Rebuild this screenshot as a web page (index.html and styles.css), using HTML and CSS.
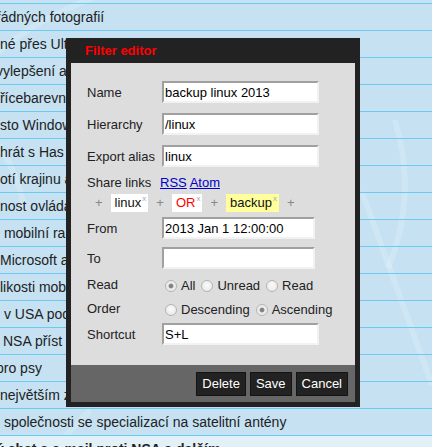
FILE: index.html
```html
<!DOCTYPE html>
<html lang="cs">
<head>
<meta charset="utf-8">
<title>Filter editor</title>
<link rel="stylesheet" href="styles.css">
</head>
<body>
<svg class="watermark" width="432" height="447" viewBox="0 0 432 447" aria-hidden="true">
  <path d="M100 -5 C 60 10, 20 30, -10 60" />
  <path d="M-5 140 C 10 160, 20 185, 25 210" />
  <path d="M395 120 C 410 170, 408 220, 388 268" />
  <path d="M362 192 L 432 385" />
  <path d="M55 447 L 90 410" />
</svg>
<ul class="list">
  <li class="row"></li>
  <li class="row cut">řádných fotografií</li>
  <li class="row">né přes Ult</li>
  <li class="row cut">vylepšení a I</li>
  <li class="row cut">třícebarevn</li>
  <li class="row">sto Window</li>
  <li class="row">hrát s Has</li>
  <li class="row">otí krajinu a</li>
  <li class="row">nost ovládá</li>
  <li class="row"> mobilní ra</li>
  <li class="row">Microsoft a</li>
  <li class="row">likosti mob</li>
  <li class="row"> v USA pod</li>
  <li class="row cut">l NSA příst</li>
  <li class="row cut">pro psy</li>
  <li class="row">největším z</li>
  <li class="row"> společnosti se specializací na satelitní antény</li>
  <li class="row unread cut">ý chat s e-mail proti NSA a dalším</li>
</ul>

<div class="dialog">
  <div class="dlg-title">Filter editor</div>
  <div class="dlg-body">
    <div class="field f-name">
      <label class="lbl">Name</label>
      <input class="txt wide" type="text" value="backup linux 2013">
    </div>
    <div class="field f-gap10">
      <label class="lbl">Hierarchy</label>
      <input class="txt wide" type="text" value="/linux">
    </div>
    <div class="field f-gap10">
      <label class="lbl">Export alias</label>
      <input class="txt wide" type="text" value="linux">
    </div>
    <div class="field share">
      <span class="lbl lbl-share">Share links</span>
      <span class="links"><a href="#">RSS</a> <a href="#">Atom</a></span>
    </div>
    <div class="tags">
      <span class="plus">+</span>
      <span class="tag">linux<span class="x">x</span></span>
      <span class="plus">+</span>
      <span class="tag op">OR<span class="x">x</span></span>
      <span class="plus">+</span>
      <span class="tag hl">backup<span class="x">x</span></span>
      <span class="plus">+</span>
    </div>
    <div class="field f-from">
      <label class="lbl">From</label>
      <input class="txt narrow" type="text" value="2013 Jan 1 12:00:00">
    </div>
    <div class="field f-gap8">
      <label class="lbl">To</label>
      <input class="txt narrow" type="text" value="">
    </div>
    <div class="field radio-row f-gap8">
      <span class="lbl">Read</span>
      <span class="opts">
        <label class="opt"><input type="radio" name="read" checked>All</label>
        <label class="opt"><input type="radio" name="read">Unread</label>
        <label class="opt"><input type="radio" name="read">Read</label>
      </span>
    </div>
    <div class="field radio-row f-gap8">
      <span class="lbl">Order</span>
      <span class="opts">
        <label class="opt"><input type="radio" name="order">Descending</label>
        <label class="opt"><input type="radio" name="order" checked>Ascending</label>
      </span>
    </div>
    <div class="field f-short">
      <label class="lbl">Shortcut</label>
      <input class="txt wide" type="text" value="S+L">
    </div>
  </div>
  <div class="dlg-foot">
    <button class="btn" type="button">Delete</button>
    <button class="btn" type="button">Save</button>
    <button class="btn" type="button">Cancel</button>
  </div>
</div>
</body>
</html>
```

FILE: styles.css
```css
html, body {
  margin: 0;
  padding: 0;
}

body {
  width: 432px;
  height: 447px;
  overflow: hidden;
  position: relative;
  background: #c5e1f2;
  font-family: "Liberation Sans", Arial, sans-serif;
  color: #222;
}

.watermark {
  position: absolute;
  left: 0;
  top: 0;
  z-index: 0;
  pointer-events: none;
}

.watermark path {
  fill: none;
  stroke: rgba(255, 255, 255, 0.18);
  stroke-width: 6;
}

.list {
  position: relative;
  z-index: 1;
  list-style: none;
  margin: -23px 0 0 0;
  padding: 0;
}

.row {
  height: 26px;
  line-height: 26px;
  border-bottom: 1px solid #6ccaf0;
  font-size: 14px;
  color: #222;
  white-space: pre;
  overflow: hidden;
}

.cut {
  text-indent: -4px;
}

.unread {
  background: #e2f0f8;
  font-weight: bold;
}

/* dialog */
.dialog {
  position: absolute;
  z-index: 5;
  left: 66px;
  top: 38px;
  width: 294px;
  box-sizing: border-box;
  background: #222;
  padding: 0 5px 5px 5px;
}

.dlg-title {
  height: 25px;
  line-height: 26px;
  padding-left: 14px;
  color: #ff0000;
  font-weight: bold;
  font-size: 13px;
}

.dlg-body {
  background: #dddddd;
  height: 302px;
  box-sizing: border-box;
  padding: 18px 0 0 16px;
  font-size: 13px;
  color: #222;
}

.field {
  display: flex;
  align-items: center;
}

.lbl {
  width: 75px;
  flex: none;
  font-size: 13px;
  color: #222;
  white-space: nowrap;
}

.f-gap10 { margin-top: 10px; }
.f-gap8 { margin-top: 8px; }
.f-from { margin-top: 5px; }
.f-short { margin-top: 6px; }

.txt {
  box-sizing: border-box;
  height: 22px;
  margin: 0;
  padding: 0 1px;
  border: 2px solid;
  border-color: #a0a0a0 #f2f2f2 #f2f2f2 #a0a0a0;
  background: #fff;
  font-family: "Liberation Sans", Arial, sans-serif;
  font-size: 13px;
  color: #000;
  outline: none;
}

.wide { width: 157px; }
.narrow { width: 153px; }

.share {
  margin-top: 8px;
  height: 16px;
  line-height: 16px;
}

.lbl-share { width: 73px; }

.links a {
  color: #0000cc;
  text-decoration: underline;
}

.tags {
  margin-top: 3px;
  display: flex;
  align-items: center;
  gap: 8px;
  padding-left: 8px;
  height: 18px;
  line-height: 18px;
}

.plus {
  color: #888;
}

.tag {
  background: #fff;
  height: 18px;
  line-height: 18px;
  padding: 0 2px 0 4px;
  color: #111;
}

.tag.op { color: #ff0000; }
.tag.hl { background: #ffff9c; }

.tag .x {
  font-size: 8px;
  line-height: 8px;
  color: #aaa;
  vertical-align: 6px;
  margin-left: 1px;
}

.radio-row {
  height: 16px;
  line-height: 16px;
}

.opts {
  display: flex;
  align-items: center;
  gap: 6px;
  margin-left: 3px;
  padding-top: 2px;
}

.opt {
  display: inline-flex;
  align-items: center;
  gap: 4px;
  color: #222;
}

.opt input {
  -webkit-appearance: none;
  appearance: none;
  margin: 0;
  width: 12px;
  height: 12px;
  box-sizing: border-box;
  border: 1px solid #b4b4b4;
  border-radius: 50%;
  background: radial-gradient(circle at 50% 40%, #fafafa 0, #e6e6e6 100%);
  position: relative;
}

.opt input:checked {
  background: radial-gradient(circle, #7a7a7a 0, #8a8a8a 2px, #e9e9e9 2.8px, #f4f4f4 100%);
}

/* footer */
.dlg-foot {
  background: #666;
  height: 37px;
  display: flex;
  justify-content: flex-end;
  align-items: center;
  gap: 4px;
  padding-right: 7px;
}

.btn {
  height: 24px;
  margin: 0;
  padding: 0 5px;
  background: #222;
  border: 1px solid #141414;
  color: #fff;
  font-family: "Liberation Sans", Arial, sans-serif;
  font-size: 13px;
  cursor: pointer;
}
```
